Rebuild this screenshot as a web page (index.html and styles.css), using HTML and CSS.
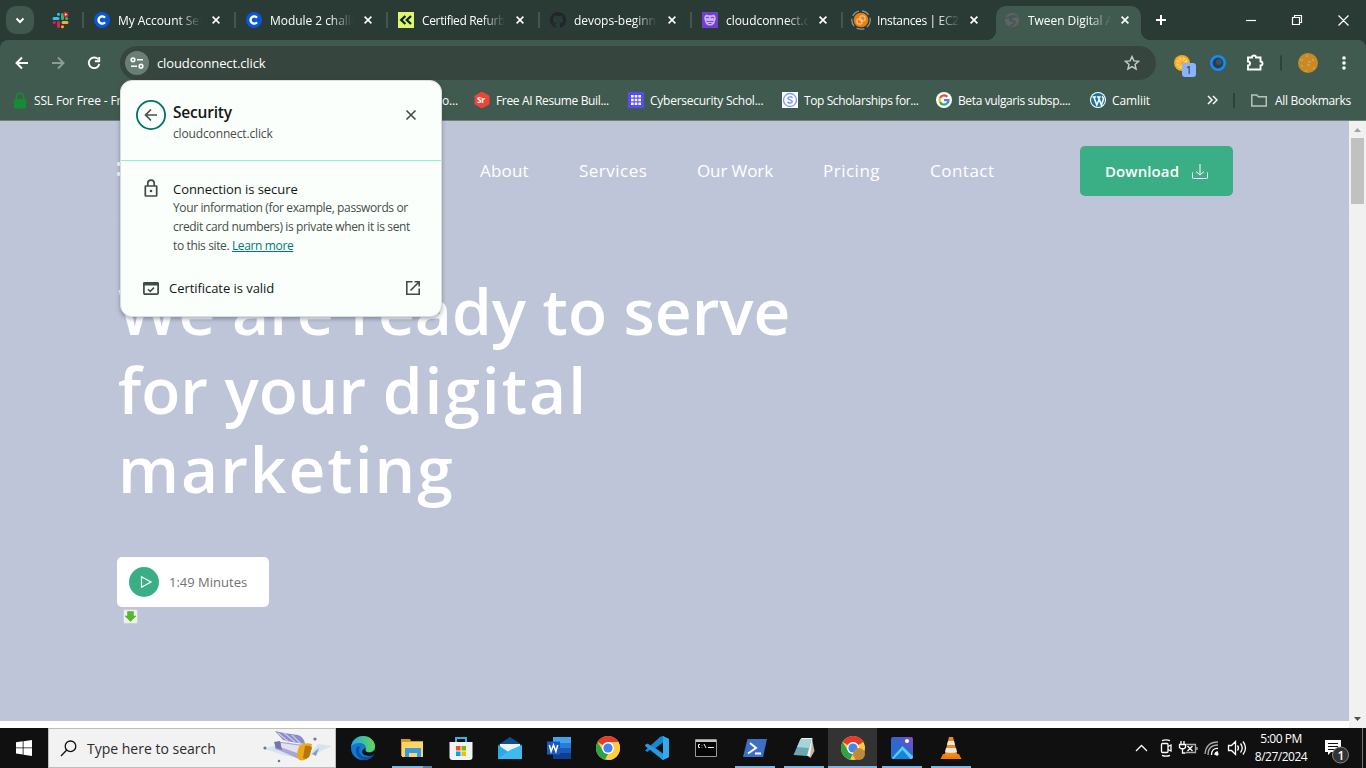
FILE: index.html
```html
<!DOCTYPE html>
<html lang="en">
<head>
<meta charset="utf-8">
<title>Tween Digital Agency</title>
<link rel="stylesheet" href="styles.css">
</head>
<body>
<div class="tabstrip">
  <div class="tab-search"><svg width="28" height="28" viewBox="0 0 28 28"><path d="M10.5 12.5l3.5 3.5 3.5-3.5" fill="none" stroke="#fff" stroke-width="2"/></svg></div>
  <div class="pinned"><svg width="17" height="17" viewBox="0 0 17 17" fill="none" stroke-width="3" stroke-linecap="round"><path d="M2 6.5h4M6.5 2.2v.1" stroke="#36c5f0"/><path d="M10.5 2.5v4" stroke="#2eb67d"/><path d="M11 10.5h4M10.5 14.7v.1" stroke="#ecb22e"/><path d="M6.5 10.5v4M2.2 10.5h.1" stroke="#e01e5a"/><path d="M14.5 6.5h.1" stroke="#2eb67d"/><circle cx="13.7" cy="2.6" r="2.6" fill="#e8202a" stroke="none"/><circle cx="13.7" cy="2.6" r="1" fill="#fff" stroke="none"/></svg></div>
  <div class="tab"><svg class="fav" viewBox="0 0 16 16"><circle cx="8" cy="8" r="8" fill="#0b56d8"/><path d="M11 5.8A3.6 3.6 0 1 0 11 10.2" fill="none" stroke="#fff" stroke-width="2.4"/></svg><span class="title">My Account Settings</span><svg class="x" viewBox="0 0 8 8"><path d="M.6.6l6.8 6.8M7.4.6L.6 7.4"/></svg></div>
  <div class="tab"><svg class="fav" viewBox="0 0 16 16"><circle cx="8" cy="8" r="8" fill="#0b56d8"/><path d="M11 5.8A3.6 3.6 0 1 0 11 10.2" fill="none" stroke="#fff" stroke-width="2.4"/></svg><span class="title">Module 2 challenge</span><svg class="x" viewBox="0 0 8 8"><path d="M.6.6l6.8 6.8M7.4.6L.6 7.4"/></svg></div>
  <div class="tab"><svg class="fav" viewBox="0 0 16 16"><path d="M0 0h16v16H0z" fill="#dff56c"/><path d="M7.4 4L3.2 8l4.2 4M13 4L8.800 8l4.200 4" fill="none" stroke="#10242e" stroke-width="2.300"/></svg><span class="title tight">Certified Refurbished</span><svg class="x" viewBox="0 0 8 8"><path d="M.6.6l6.8 6.8M7.4.6L.6 7.4"/></svg></div>
  <div class="tab"><svg class="fav" viewBox="0 0 16 16"><path fill="#20262b" d="M8 0C3.580 0 0 3.580 0 8c0 3.540 2.290 6.530 5.470 7.590.4.070.550-.170.550-.380 0-.190-.010-.820-.010-1.490-2.010.370-2.530-.490-2.690-.940-.090-.230-.480-.940-.820-1.130-.280-.150-.680-.520-.010-.530.630-.010 1.080.580 1.230.820.720 1.210 1.870.870 2.330.660.070-.520.280-.870.510-1.070-1.780-.2-3.640-.890-3.640-3.950 0-.870.310-1.590.820-2.150-.080-.2-.360-1.020.080-2.120 0 0 .670-.210 2.200.820a7.600 7.600 0 0 1 4 0c1.530-1.040 2.200-.820 2.200-.820.440 1.100.160 1.920.080 2.120.510.560.820 1.270.820 2.150 0 3.070-1.870 3.750-3.650 3.950.290.250.540.730.540 1.480 0 1.070-.010 1.930-.010 2.200 0 .210.150.460.550.380A8 8 0 0 0 16 8c0-4.420-3.580-8-8-8z"/></svg><span class="title">devops-beginner</span><svg class="x" viewBox="0 0 8 8"><path d="M.6.6l6.8 6.8M7.4.6L.6 7.4"/></svg></div>
  <div class="tab tab-cc"><svg class="fav" viewBox="0 0 16 16"><path d="M0 0h16v16H0z" fill="#6f3fd0"/><path d="M3 3.500l1.500-1 2 .8h3l2-.8 1.500 1q1.500 2.500.3 5L12 12q-4 3-8 0L2.700 8.500q-1.200-2.500.3-5z" fill="#cdb2fa"/><path d="M4 6q1.500-1.500 3 0M9 6q1.500-1.500 3 0M4.500 9.500h7M6.500 11.500h3" fill="none" stroke="#7744d0" stroke-width="1.100"/></svg><span class="title">cloudconnect.click</span><svg class="x" viewBox="0 0 8 8"><path d="M.6.6l6.800 6.800M7.400.6L.6 7.400"/></svg></div>
  <div class="tab tab-ec2"><svg class="fav big" viewBox="0 0 20 20"><circle cx="10" cy="10" r="9.200" fill="none" stroke="#8c9893" stroke-width="1.300" stroke-dasharray="8 3"/><circle cx="10" cy="10" r="7.300" fill="#ed7d0c"/><rect x="6" y="9" width="5" height="5" rx="1" fill="none" stroke="#fbd9ae"/><rect x="9" y="6" width="5" height="5" rx="1" fill="none" stroke="#fbd9ae"/></svg><span class="title tight">Instances | EC2 | us</span><svg class="x" viewBox="0 0 8 8"><path d="M.6.6l6.8 6.8M7.4.6L.6 7.4"/></svg></div>
  <div class="tab active"><svg class="fav globe" viewBox="0 0 16 16"><circle cx="8" cy="8" r="7" fill="#5f6368"/><path d="M2.500 6C6 5 8 2 13 5M10 5c-2 2-5 1-4 3s5 0 5 2-3 3-5 4" fill="none" stroke="#41584f" stroke-width="1.700"/></svg><span class="title">Tween Digital Agency</span><svg class="x" viewBox="0 0 8 8"><path d="M.6.6l6.800 6.800M7.400.6L.6 7.400"/></svg></div>
  <svg class="winctl" width="225" height="40" viewBox="0 0 225 40" fill="none" stroke="#fff"><path d="M15 20h10M20 15v10" stroke-width="2"/><path d="M105 20.500h10" stroke-width="1.200"/><path d="M151.500 17.500h7v7h-7zM153.500 17.500v-2h7v7h-2M197.500 15.500l10 10M207.500 15.500l-10 10" stroke-width="1.200"/></svg>
</div>
<div class="toolbar">
  <svg class="navbtns" width="120" height="46" viewBox="0 0 120 46" fill="none" stroke="#fff" stroke-width="1.900"><path d="M28 23H17M22 17.500L16.500 23l5.500 5.500"/><g stroke="#8f9d97"><path d="M52 23h11M58 17.500l5.500 5.500-5.500 5.500"/></g><path d="M98 19.200a5.300 5.300 0 1 0 1.300 4.800"/><path d="M99.200 17v4.300h-4.300"/></svg>
  <div class="omnibox">
    <svg class="site" width="24" height="24" viewBox="0 0 24 24"><circle cx="12" cy="12" r="12" fill="#697f76"/><g fill="none" stroke="#fff" stroke-width="1.600"><circle cx="8" cy="8.800" r="1.800"/><path d="M12 8.800h6M6 15.200h6"/><circle cx="16" cy="15.200" r="1.800"/></g></svg>
    <span class="url">cloudconnect.click</span>
    <svg class="star" width="16" height="16" viewBox="0 0 16 16"><path d="M8 1.500l1.900 4.400 4.700.4-3.600 3.100 1.100 4.600L8 11.600 3.900 14 5 9.400 1.400 6.300l4.700-.4z" fill="none" stroke="#c6cfca" stroke-width="1.400"/></svg>
  </div>
  <svg width="210" height="46" viewBox="0 0 210 46"><circle cx="26" cy="23" r="8" fill="#f5a623"/><circle cx="26" cy="23" r="6" fill="#ffcf5e"/><path d="M26 17v12M20 23h12M22 19l8 8M30 19l-8 8" stroke="#f5a020" stroke-width=".9"/><rect x="26" y="23" width="14" height="14" rx="3" fill="#8ab4f8"/><text x="30" y="34" font-family="Open Sans" font-size="10" fill="#202124">1</text><circle cx="62" cy="23" r="6.700" fill="#2b3c4b" stroke="#148bf5" stroke-width="2.600"/><circle cx="63" cy="22" r="3" fill="#3d5260"/><path d="M92 17.500h4a2 2 0 0 1 4 0h4.500v4a2 2 0 0 1 0 4v4H92v-4a2 2 0 0 0 0-4z" fill="none" stroke="#fff" stroke-width="1.900"/><path d="M125 15.500v15" stroke="#2d4239" stroke-width="2"/><circle cx="152" cy="23" r="10" fill="#c88a27"/><path d="M144 20h3m3-4h2m4 4h2m-6 2h3m-10 4h2m4-1h3m3 3h2m-10 3h2" stroke="#e3b149"/><g fill="#fff"><circle cx="188" cy="18" r="1.800"/><circle cx="188" cy="23" r="1.800"/><circle cx="188" cy="28" r="1.800"/></g></svg>
</div>
<div class="bookmarks">
  <div class="bm bm1"><svg width="14" height="17" viewBox="0 0 14 17"><rect x="1" y="7" width="12" height="9.500" rx="1" fill="#168a36"/><path d="M3.500 8V4.500a3.500 3.500 0 0 1 7 0V8" fill="none" stroke="#168a36" stroke-width="1.800"/></svg><span>SSL For Free - Free</span></div>
  <div class="bm bm2"><span>o...</span></div>
  <div class="bm bm3"><svg class="fav" viewBox="0 0 16 16"><path d="M8 0l7 4v8l-7 4-7-4V4z" fill="#f44336" stroke="#f44336" stroke-linejoin="round"/><text x="3" y="11" font-family="Open Sans" font-weight="700" font-size="8.500" fill="#fff">Sr</text></svg><span>Free AI Resume Buil...</span></div>
  <div class="bm bm4"><svg class="fav" viewBox="0 0 16 16"><path d="M0 0h16v16H0z" fill="#584df5"/><path d="M3 3h2.600v2.600H3zM6.700 3h2.600v2.600H6.700zM10.400 3H13v2.600h-2.600zM3 6.700h2.600v2.600H3zM6.700 6.700h2.600v2.600H6.700zM10.400 6.700H13v2.600h-2.600zM3 10.400h2.600V13H3zM6.700 10.400h2.600V13H6.700zM10.400 10.400H13V13h-2.600z" fill="#fff"/></svg><span>Cybersecurity Schol...</span></div>
  <div class="bm bm5"><svg class="fav" viewBox="0 0 16 16"><path d="M0 0h16v16H0z" fill="#fff"/><circle cx="8" cy="8" r="6.500" fill="none" stroke="#7c9cf0" stroke-width="1.300"/><path d="M10.500 5.800C9 4.200 5.800 4.700 6 6.500s4.200 1 4.200 3-3.200 2-4.700.6" fill="none" stroke="#7c9cf0" stroke-width="1.500"/></svg><span class="schol">Top Scholarships for...</span></div>
  <div class="bm bm6"><svg class="fav" viewBox="0 0 16 16"><circle cx="8" cy="8" r="8" fill="#fff"/><g fill="none" stroke-width="2.200"><path d="M11.300 4.800A4.500 4.500 0 0 0 4 6" stroke="#ea4335"/><path d="M4 6a4.500 4.500 0 0 0 0 4" stroke="#fbbc05"/><path d="M4 10a4.500 4.500 0 0 0 7 1.500" stroke="#34a853"/><path d="M11 11.500A4.500 4.500 0 0 0 12.500 8.200H8" stroke="#4285f4"/></g></svg><span class="beta">Beta vulgaris subsp....</span></div>
  <div class="bm bm7"><svg class="fav" viewBox="0 0 16 16"><circle cx="8" cy="8" r="8" fill="#fff"/><circle cx="8" cy="8" r="7" fill="#1b769c"/><path d="M2.500 5h3.600M3.800 5l3 8L9 7.500M7 5h3.600M8.400 5l3 8 2-5.500C14 6 12 5.500 12.500 4" fill="none" stroke="#fff" stroke-width="1.500"/></svg><span class="caml">Camliit</span></div>
  <svg class="more" width="11" height="10" viewBox="0 0 11 10"><path d="M1 1l4 4-4 4M6 1l4 4-4 4" fill="none" stroke="#fff" stroke-width="1.500"/></svg>
  <div class="bm-sep"></div>
  <svg width="16" height="13" viewBox="0 0 16 13"><path d="M.8 1h5l1.500 1.700h8V12H.8z" fill="none" stroke="#b9c3be" stroke-width="1.500"/></svg>
  <span class="allbm">All Bookmarks</span>
</div>
<div class="viewport">
  <main class="page">
    <header class="site-head">
      <div class="logo"><i></i><i></i></div>
      <nav><a class="n1">About</a><a class="n2">Services</a><a class="n3">Our Work</a><a class="n4">Pricing</a><a class="n5">Contact</a></nav>
      <a class="download"><span>Download</span><svg width="16" height="15" viewBox="0 0 16 15" fill="none" stroke="#fff"><path d="M8 0v11M4 7.500L8 11l4-3.500M.5 8.500v5q0 1 1 1h13q1 0 1-1v-5"/></svg></a>
    </header>
    <h1><span class="line">We are ready to serve</span><span class="line">for your <span class="wide">digital</span></span><span class="line wide">marketing</span></h1>
    <div class="play"><svg width="30" height="30" viewBox="0 0 30 30"><circle cx="15" cy="15" r="15" fill="#3aaf85"/><path d="M12.500 9.800L22 15l-9.500 5.200z" fill="none" stroke="#fff" stroke-width="1.200"/></svg><span>1:49 Minutes</span></div>
    <svg class="idm" width="15" height="15" viewBox="0 0 15 15"><rect x=".5" y=".5" width="14" height="14" rx="1.500" fill="#eff0eb" stroke="#cfd2cd"/><path d="M4.500 2.500h6V7h2.500l-5.500 5.500L2 7h2.500z" fill="#4fbd2a" stroke="#77a35b" stroke-width=".6"/></svg>
  </main>
  <div class="scroll"><svg width="17" height="17" viewBox="0 0 17 17"><path d="M5 11l3.500-4 3.500 4z" fill="#a3a3a3"/></svg><div class="thumb"></div><svg width="17" height="17" viewBox="0 0 17 17"><path d="M5 6l3.500 4L12 6z" fill="#505050"/></svg></div>
</div>
<div class="taskbar">
  <div class="start"><svg width="16" height="16" viewBox="0 0 16 16" fill="#fff"><path d="M0 2.200l6.700-.9v6.200H0zM7.500 1.200L16 0v7.500H7.500zM0 8.300h6.700v6.200L0 13.600zM7.500 8.300H16V16l-8.500-1.200z"/></svg></div>
  <div class="search"><svg width="17" height="17" viewBox="0 0 17 17"><circle cx="10.500" cy="6.300" r="5.300" fill="none" stroke="#111" stroke-width="1.300"/><path d="M6.700 10L1 16" stroke="#111" stroke-width="1.300"/></svg><span>Type here to search</span>
    <svg class="art" width="70" height="36" viewBox="0 0 70 36"><path d="M2 19l16-6 17 15-15-3zM45 27l24-11-14-2z" fill="#d6e4ed"/><path d="M12 1l9 2 14 2q6 2 7 9l-13-2-9-2z" fill="#8d8cc9"/><path d="M15 3l11 9M21 3l11 9M29 5l9 9" stroke="#c7c9ef" stroke-width="1.300"/><path d="M12 12l7 0 22 3-3 15-20-9-6-2z" fill="#aaa6d2"/><path d="M18 13l21 3-2 8-20-7z" fill="#e4e0f4"/><path d="M11 12l6-1 2 9-6-2z" fill="#7574a8"/><path d="M37 15q6-3 12-1l-2 11q-4 7-11 5-4-7 1-15z" fill="#e9aa16"/><path d="M42 16q6-1 7 2l-3 9q-3 3-6 1z" fill="#b5770b"/><path d="M49 24l7-6-3 8z" fill="#849fb8"/><g fill="#6b769b"><circle cx="2" cy="18" r="1.600"/><circle cx="52" cy="9" r="1.600"/><circle cx="16" cy="31" r="1.300"/></g></svg>
  </div>
  <div class="apps">
    <div class="app"><svg viewBox="0 0 24 24"><defs><linearGradient id="eg" x1="0" x2="1"><stop stop-color="#1ea7e8"/><stop offset="1" stop-color="#64d94d"/></linearGradient></defs><circle cx="12" cy="12" r="12" fill="#1577cf"/><path d="M0 11C1 4 6 0 12 0c7 0 12 5 12 10 0 4-3 6-6 6-4 0-4-2-3-4 0-3-3-5-7-5-4 0-7 2-8 4z" fill="url(#eg)"/><path d="M9 11c-3 5 1 10 6 10 4 0 6-2 7-3 2-1 2 0 1 1a12 12 0 0 1-10 5C8 23 4 18 5 14c0-3 2-5 4-3z" fill="#0c52a3"/><path d="M14.800 12c-1.300 3 .5 4.700 4 4.500 2-.2 4.500-1.500 5.200-3v4c-2 2-5 3-9 2-5-1-5-6-.2-7.500z" fill="#101010"/></svg></div>
    <div class="app on split"><svg viewBox="0 0 24 24"><path d="M1 3h9l1 2h12v15H1z" fill="#d99a12"/><path d="M2 6h21v15H2z" fill="#fbd667"/><path d="M5 12h16v9h-4v-4H9v4H5z" fill="#3b9ade"/></svg></div>
    <div class="app"><svg viewBox="0 0 24 24"><path d="M7 6V2h10v4" fill="none" stroke="#33b4e8" stroke-width="2"/><path d="M.500 6h23v15q0 3-3 3h-17q-3 0-3-3z" fill="#f1f3f4"/><path d="M7 10h4.500v4.500H7z" fill="#f25022"/><path d="M12.500 10H17v4.500h-4.500z" fill="#7fba00"/><path d="M7 15.500h4.500V20H7z" fill="#00a4ef"/><path d="M12.500 15.500H17V20h-4.500z" fill="#ffb900"/></svg></div>
    <div class="app"><svg viewBox="0 0 24 24"><path d="M0 9l12-8 12 8v5H0z" fill="#0e4f91"/><path d="M2 8h20v10H2z" fill="#f1f1f1"/><path d="M0 9l12 8 12-8v14H0z" fill="#29a9e8"/><path d="M0 23l12-9 12-5v14z" fill="#3dbaf2"/></svg></div>
    <div class="app"><svg viewBox="0 0 24 24"><path d="M6 1h18v6H6z" fill="#41a5ee"/><path d="M6 7h18v5H6z" fill="#2b7cd3"/><path d="M6 12h18v5H6z" fill="#185abd"/><path d="M6 17h18v6H6z" fill="#103f91"/><path d="M0 5.500h13v13H0z" fill="#185abd"/><path d="M2.300 9l1.800 6.500L6.500 9l2.400 6.500L10.700 9" fill="none" stroke="#fff" stroke-width="1.500"/></svg></div>
    <div class="app"><svg viewBox="0 0 24 24"><circle cx="12" cy="12" r="12" fill="#ffcd40"/><path d="M12 12L1.600 6A12 12 0 0 1 22.400 6z" fill="#e33b2e"/><path d="M1.600 6L8 16.500l4 1.500-3 5.600A12 12 0 0 1 1.600 6z" fill="#2aa34a"/><path d="M12 6h10.400A12 12 0 0 1 12 24l5.200-9z" fill="#ffcd40"/><circle cx="12" cy="12" r="6" fill="#fff"/><circle cx="12" cy="12" r="4.600" fill="#4285f4"/></svg></div>
    <div class="app"><svg viewBox="0 0 24 24"><path d="M17.500 0L24 3v18l-6.500 3L6 12.800 2.500 16 0 14.500 15 1z" fill="#1787cf"/><path d="M0 9l2.500-1.500L18 18v6L0 10z" fill="#249bdf"/><path d="M18 6.500v11L10.500 12z" fill="#101010"/><path d="M18 0l6 3v18l-6 3z" fill="#35a9ed"/></svg></div>
    <div class="app"><svg viewBox="0 0 24 24"><path d="M1.500 3.500h21v17h-21z" fill="#050505" stroke="#999"/><path d="M2 4h20v2H2z" fill="#c6c6c6"/><path d="M6 8.500H4.500v3H6M8 9v.500M8 11v.500M10 8l2 4M14 11.500h6" fill="none" stroke="#eee"/></svg></div>
    <div class="app on"><svg viewBox="0 0 24 24"><path d="M4.500 3H24l-4 18H0z" fill="#3d6fc9"/><path d="M7 7l6 5-8 5.500M12 17.500h6" fill="none" stroke="#fff" stroke-width="2"/></svg></div>
    <div class="app on"><svg viewBox="0 0 24 24"><path d="M20 3l2.500 12-4 7-4-3z" fill="#c9b49a"/><path d="M9 2l11.500 0-2.500 18.500-4-1z" fill="#eef2f2"/><path d="M8.500 3h11l-4.500 17-13.500-1z" fill="#69a8b3"/><path d="M8.500 3h11l-2.500 9-12-1z" fill="#a8d3d8"/></svg></div>
    <div class="app on current"><svg viewBox="0 0 24 24"><circle cx="12" cy="12" r="12" fill="#ffcd40"/><path d="M12 12L1.600 6A12 12 0 0 1 22.400 6z" fill="#e33b2e"/><path d="M1.600 6L8 16.500l4 1.500-3 5.600A12 12 0 0 1 1.600 6z" fill="#2aa34a"/><circle cx="12" cy="12" r="6" fill="#fff"/><circle cx="12" cy="12" r="4.600" fill="#4285f4"/><circle cx="18" cy="18" r="6" fill="#c0893a"/></svg></div>
    <div class="app on"><svg viewBox="0 0 24 24"><defs><linearGradient id="ph" x1="0" y1="1" x2="1" y2="0"><stop stop-color="#1377d6"/><stop offset=".6" stop-color="#3b62cc"/><stop offset="1" stop-color="#8a49c6"/></linearGradient></defs><rect x="1" y="1" width="22" height="22" rx="2" fill="url(#ph)"/><path d="M2 22L12.500 10 23 20.500q0 2.500-2 2.500H3z" fill="#56cdf5"/><path d="M3.500 23l9-9 8 9z" fill="#1b82dc"/><circle cx="17" cy="5" r="2" fill="#fff"/></svg></div>
    <div class="app on"><svg viewBox="0 0 24 24"><path d="M4 18h16l2.500 5h-21z" fill="#f07c00"/><path d="M10 1h4l4.500 18q-6.500 3-13 0z" fill="#f58a12"/><path d="M9 5h6l1 4H8zM7 12h10l1 4q-6 2-12 0z" fill="#e8e8e8"/></svg></div>
  </div>
  <svg class="tray" width="125" height="40" viewBox="0 0 125 40" fill="none" stroke="#fff" stroke-width="1.300"><path d="M5 23l5.500-5.500L16 23"/><rect x="30.500" y="15.500" width="6.500" height="9" rx="1"/><path d="M37 18.500l3-1.500v6l-3-1.500M31 12.700q4-1.700 8 0M31 27.300q4 1.700 8 0"/><path d="M50 13v3M53 13v3M48.500 16.500h6v3q-3 3-6 0zM51.500 20v5h3"/><path d="M55 16.500h9.500v8H55M66 19v3" stroke="#aaa"/><path d="M56.500 18l5 5M61.500 18l-5 5"/><g><path d="M84 27q0-3 3-3M80.500 27q0-7 6.500-6.500"/><path d="M77 27q0-10 10-10M74 26q1-12 13-12" stroke="#aaa"/><circle cx="86" cy="26" r="1" fill="#fff"/></g><path d="M97.500 17.500h3l4-4v13l-4-4h-3zM106.500 17.500q2 2.500 0 5M109.500 15.500q3.500 4.500 0 9M112 13.500q5 6.500 0 13"/></svg>
  <div class="clock"><span>5:00 PM</span><span>8/27/2024</span></div>
  <svg class="note" width="50" height="40" viewBox="0 0 50 40"><path d="M15 12h16v12H21l-3 3v-3h-3z" fill="#fff"/><path d="M18 15.500h10M18 18.500h10M18 21.500h7" stroke="#111"/><circle cx="30.500" cy="27" r="8" fill="#333" stroke="#888"/><text x="27.500" y="31.500" font-family="Open Sans" font-weight="600" font-size="12" fill="#fff">1</text></svg>
  <div class="peek"></div>
</div>

<div class="popup">
  <div class="p-head">
    <svg width="30" height="30" viewBox="0 0 30 30" fill="none"><circle cx="15" cy="15" r="14.100" fill="#fafffc" stroke="#00725f" stroke-width="1.800"/><path d="M21 15H10M15 9.500L9.500 15l5.500 5.500" stroke="#474f4b" stroke-width="1.700"/></svg>
    <div class="p-title"><strong>Security</strong><span>cloudconnect.click</span></div>
    <svg class="p-close" width="12" height="12" viewBox="0 0 12 12"><path d="M1.500 1.500l9 9M10.500 1.500l-9 9" stroke="#414b46" stroke-width="1.600"/></svg>
  </div>
  <div class="p-sec">
    <svg width="14" height="18" viewBox="0 0 14 18" fill="none" stroke="#414b46" stroke-width="1.700"><rect x="1.300" y="7" width="11.400" height="10" rx=".5"/><path d="M3.800 7V4.300a3.200 3.200 0 0 1 6.400 0V7"/><circle cx="7" cy="12" r="1.300" fill="#414b46" stroke="none"/></svg>
    <div class="p-text"><b>Connection is secure</b><p>Your information (for example, passwords or<br>credit card numbers) is private when it is sent<br>to this site. <a>Learn more</a></p></div>
  </div>
  <div class="p-cert">
    <svg width="16" height="13" viewBox="0 0 16 13"><rect x=".9" y=".9" width="14.200" height="11.200" rx="1" fill="none" stroke="#414b46" stroke-width="1.700"/><path d="M0 1.500Q0 0 1.500 0h13Q16 0 16 1.500V3.500H0z" fill="#414b46"/><path d="M5 7.200l2.200 2.200L11 5.600" fill="none" stroke="#414b46" stroke-width="1.500"/></svg>
    <span>Certificate is valid</span>
    <svg width="14" height="14" viewBox="0 0 14 14" fill="none" stroke="#414b46" stroke-width="1.600"><path d="M6.500.8H.8v12.400h12.400V7.500M8.500.8h4.700v4.700M13 1L4.500 9.500"/></svg>
  </div>
</div>
</body>
</html>
```

FILE: styles.css
```css
* { box-sizing: border-box; }
body { margin: 0; width: 1366px; height: 768px; overflow: hidden; display: flex; flex-direction: column; font-family: "Open Sans", "Noto Sans", sans-serif; font-size: 12px; color: #fff; background: #fff; }
svg { display: block; flex: none; }
span, a { white-space: nowrap; }

.tabstrip { height: 40px; background: #2a3a34; display: flex; }
.tab-search { width: 28px; height: 28px; margin: 6px 0 0 6px; border-radius: 10px; background: #41584f; }
.pinned { width: 48px; padding: 12px 0 0 18px; }
.tab { width: 152px; height: 40px; display: flex; align-items: center; }
.tab::before { content: ""; width: 2px; height: 16px; margin-right: 10px; background: #41584f; flex: none; }
.fav { width: 16px; height: 16px; flex: none; }
.title { width: 83px; margin-left: 8px; overflow: hidden; letter-spacing: -0.05px; -webkit-mask-image: linear-gradient(90deg, #000 60px, transparent 83px); mask-image: linear-gradient(90deg, #000 60px, transparent 83px); }
.title.tight { letter-spacing: -0.35px; }
.x { width: 8px; height: 8px; margin-left: 11px; stroke: #fff; stroke-width: 1.7; }
.tab-cc { width: 151px; }
.tab-cc .x, .active .x { margin-left: 10px; }
.tab-ec2 .fav { width: 20px; height: 20px; margin-left: -1px; }
.tab-ec2 .title { margin-left: 6px; }
.tab-ec2 .x { margin-left: 10px; }
.tab-ec2::before { margin-right: 9px; }
.tab-ec2 { width: 155px; }
.active { width: 145px; height: 34px; margin-top: 6px; padding-bottom: 6px; border-radius: 10px 10px 0 0; background: #415a50; position: relative; }
.active::before { display: none; }
.active .fav { margin-left: 8px; }
.active::after { content: ""; position: absolute; left: -10px; right: -10px; bottom: 0; height: 10px; background: radial-gradient(circle at 0 0, transparent 10px, #415a50 10.5px) left / 10px 10px no-repeat, radial-gradient(circle at 100% 0, transparent 10px, #415a50 10.5px) right / 10px 10px no-repeat; }

.toolbar { height: 46px; background: #2a3a34; display: flex; position: relative; }
.toolbar::before { content: ""; position: absolute; inset: 0; border-radius: 8px 8px 0 0; background: #415a50; }
.toolbar > * { position: relative; }
.omnibox { width: 1036px; height: 34px; margin-top: 6px; border-radius: 17px; background: #37453f; display: flex; align-items: center; padding: 0 16px 0 5px; }
.url { flex: 1; margin-left: 8px; font-size: 13px; letter-spacing: -0.12px; }

.bookmarks { height: 35px; background: #415a50; border-bottom: 1px solid #6b8379; display: flex; align-items: center; padding: 0 0 6px 13px; letter-spacing: -0.35px; }
.bm { display: flex; align-items: center; gap: 6px; overflow: hidden; flex: none; }
.bm1 { width: 429px; gap: 7px; letter-spacing: -0.15px; }
.bm2 { width: 32px; letter-spacing: -0.2px; }
.bm3, .bm4, .bm5, .bm6 { width: 154px; }
.bm4 { letter-spacing: -0.25px; }
.bm7 { width: 117px; }
.schol { letter-spacing: -0.4px; }
.beta { letter-spacing: -0.38px; }
.caml { letter-spacing: -0.1px; }
.bm-sep { width: 2px; height: 15px; margin: 0 16px 0 15px; background: #2d4239; }
.allbm { margin-left: 8px; letter-spacing: -0.32px; }

.viewport { height: 607px; display: flex; background: #fff; }
.page { width: 1349px; height: 600px; background: #bfc5d9; padding-left: 117px; }
.site-head { height: 101px; display: flex; align-items: center; border-bottom: 1px solid #c1c7da; }
.logo { width: 363px; display: flex; flex-direction: column; gap: 6px; padding: 0 0 4px 0; }
.logo i { width: 6px; height: 4px; border-radius: 2px; background: #fff; }
nav { display: flex; width: 600px; font-size: 17px; padding-bottom: 2px; letter-spacing: 0.3px; }
.n1 { width: 99px; letter-spacing: 0.2px; }
.n2 { width: 118px; letter-spacing: 0.5px; }
.n3 { width: 126px; letter-spacing: -0.1px; }
.n4 { width: 107px; letter-spacing: 0.5px; }
.n5 { letter-spacing: 0.5px; }
.download { width: 153px; height: 50px; border-radius: 5px; background: #3aaf85; display: flex; align-items: center; justify-content: space-between; padding: 0 25px; font-size: 15px; font-weight: 600; }
.download span { letter-spacing: 0.1px; padding-bottom: 1px; }
h1 { margin: 49px 0 0 1px; font-size: 64px; line-height: 79px; font-weight: 600; letter-spacing: 0; }
.line { display: block; }
.wide { letter-spacing: 2px; }
.play { width: 152px; height: 50px; margin-top: 49px; border-radius: 5px; background: #fff; color: #727272; display: flex; align-items: center; gap: 10px; padding-left: 12px; font-size: 13px; }
.play span { padding-bottom: 1px; }
.idm { margin: 2px 0 0 6px; }
.scroll { width: 17px; background: #f1f1f1; display: flex; flex-direction: column; }
.thumb { width: 13px; height: 66px; margin: 0 2px auto; background: #c1c1c1; }

.taskbar { height: 40px; background: #101010; display: flex; }
.start { width: 48px; flex: none; display: flex; align-items: center; justify-content: center; }
.search { width: 288px; flex: none; height: 40px; background: #f2f2f2; border: 1px solid #bdbdbd; display: flex; align-items: center; padding-left: 11px; color: #2b2b2b; font-size: 14px; }
.search span { margin-left: 10px; }
.art { margin-left: auto; margin-right: 2px; }
.apps { display: flex; padding-left: 2px; flex: none; }
.app { width: 49px; height: 40px; display: flex; justify-content: center; align-items: center; position: relative; }
.app svg { width: 24px; height: 24px; }
.on::after { content: ""; position: absolute; left: 5px; right: 4px; bottom: 0; height: 2px; background: #76b9ed; }
.split::after { background: linear-gradient(90deg, #76b9ed 31px, #557fa3 31px); }
.current { background: #333; }
.current::after { left: 0; right: 0; }
.tray { margin-left: 156px; }
.clock { width: 62px; flex: none; display: flex; flex-direction: column; align-items: center; margin-left: -4px; padding: 2px 4px 0 0; line-height: 18px; font-size: 12px; letter-spacing: -0.5px; }
.note { margin-left: -4px; }
.peek { width: 1px; margin-left: 2px; background: #777; }

.popup { position: absolute; left: 120px; top: 80px; width: 322px; height: 237px; border-radius: 12px; background: #fafffc; border: 1px solid #d7dfdc; box-shadow: 0 2px 4px rgba(40, 50, 70, .4); color: #121614; }
.p-head { height: 80px; border-bottom: 1px solid #8df0da; display: flex; padding: 19px 24px 0 15px; }
.p-title { margin-left: 7px; flex: 1; display: flex; flex-direction: column; }
.p-title strong { font-size: 15.5px; font-weight: 600; line-height: 24px; letter-spacing: -0.2px; }
.p-title span { color: #454d49; line-height: 19px; letter-spacing: -0.14px; }
.p-close { margin-top: 9px; }
.p-sec { display: flex; padding: 18px 0 0 23px; height: 97px; }
.p-text { margin-left: 15px; }
.p-text b { display: block; font-weight: 400; font-size: 13px; line-height: 20px; letter-spacing: -0.05px; }
.p-text p { margin: -1px 0 0; line-height: 19px; color: #454d49; letter-spacing: -0.37px; white-space: nowrap; }
.p-text a { color: #00796b; text-decoration: underline; }
.p-cert { display: flex; align-items: center; height: 20px; margin-top: 20px; padding: 0 21px 0 22px; font-size: 13px; }
.p-cert span { flex: 1; margin-left: 10px; letter-spacing: -0.05px; }
```
